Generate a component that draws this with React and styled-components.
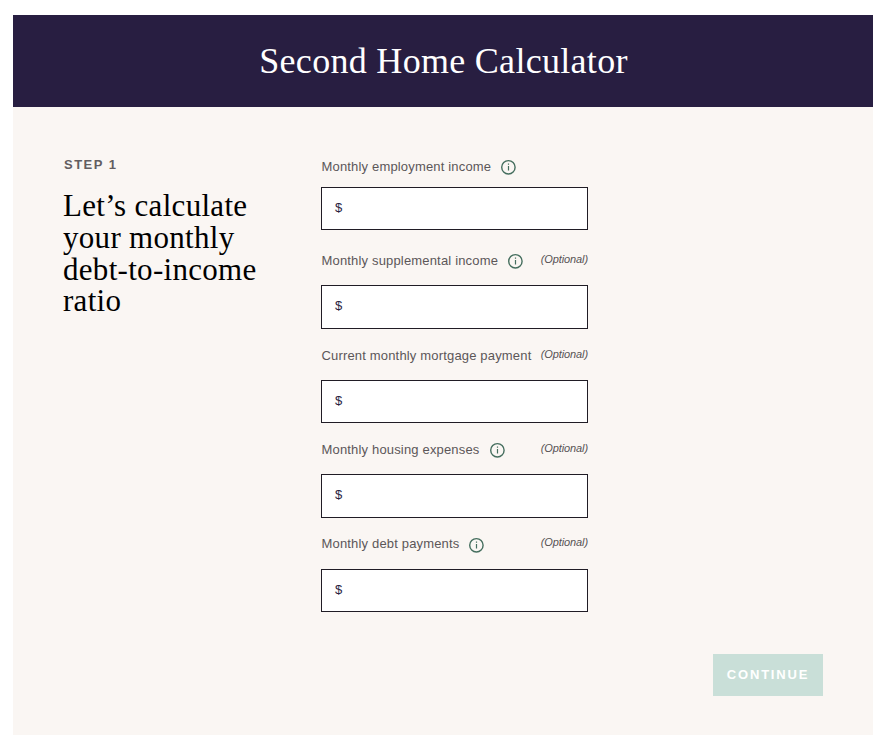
import React from "react";
import styled, { createGlobalStyle } from "styled-components";

const GlobalStyle = createGlobalStyle`
  * { box-sizing: border-box; }
  body { margin: 0; background: #fff; font-family: "Liberation Sans", Arial, sans-serif; }
`;

const Page = styled.div`
  height: 745px;
  padding: 15px 8px 10px 13px;
`;

const Card = styled.main`
  height: 720px;
  background: #faf6f3;
`;

const Banner = styled.header`
  height: 92px;
  background: #281e41;
  display: flex;
  justify-content: center;
`;

const Title = styled.h1`
  margin: 0;
  color: #fff;
  font: 400 36px/92px "Liberation Serif", "Times New Roman", serif;
  white-space: nowrap;
  letter-spacing: 0.3px;
  padding-left: 1px;
`;

const Content = styled.form`
  display: grid;
  grid-template-columns: 258px 267px;
  height: 547px;
  padding: 47px 0 0 50px;
`;

const Step = styled.p`
  margin: 3px 0 0 1px;
  color: #625d60;
  font-size: 13px;
  line-height: 16px;
  font-weight: 700;
  letter-spacing: 1.5px;
`;

const Heading = styled.h2`
  margin: 17px 0 0;
  color: #000;
  font: 400 31px/31.8px "Liberation Serif", "Times New Roman", serif;
  letter-spacing: 0.3px;
  white-space: nowrap;
`;

const Fields = styled.div`
  display: flex;
  flex-direction: column;
`;

const Field = styled.div`
  height: ${(p) => p.$height}px;
`;

const LabelRow = styled.div`
  display: flex;
  height: ${(p) => p.$height}px;
  align-items: flex-start;
`;

const Label = styled.label`
  padding-left: 0.5px;
  color: #5c5759;
  font-size: 13px;
  line-height: 26px;
  letter-spacing: 0.17px;
  white-space: nowrap;
`;

const InfoIcon = styled.svg`
  width: 16px;
  height: 16px;
  margin: ${(p) => p.$top}px 0 0 9px;
  flex: none;
`;

const Optional = styled.span`
  margin-left: auto;
  color: #575254;
  font-size: 11px;
  font-style: italic;
  line-height: 23px;
  letter-spacing: -0.1px;
`;

const InputBox = styled.div`
  display: flex;
  height: ${(p) => p.$height}px;
  border: 1px solid #201c25;
  background: #fff;
  padding-left: 13px;
  color: #281e41;
  font-size: 13px;
  line-height: 40px;
`;

const Input = styled.input`
  flex: 1;
  min-width: 0;
  border: 0;
  outline: 0;
  background: transparent;
`;

const Actions = styled.div`
  display: flex;
  justify-content: flex-end;
  padding-right: 50px;
`;

const Continue = styled.button`
  width: 110px;
  height: 42px;
  padding: 0;
  border: 0;
  background: #c9dfd8;
  color: #fff;
  font: 700 13px/40px "Liberation Sans", Arial, sans-serif;
  letter-spacing: 1.8px;
`;

const fields = [
  { label: "Monthly employment income", info: true, height: 94, row: 33, box: 43, iconTop: 5 },
  { label: "Monthly supplemental income", info: true, optional: true, height: 95, row: 37, box: 44, iconTop: 5 },
  { label: "Current monthly mortgage payment", optional: true, height: 94, row: 37, box: 43 },
  { label: "Monthly housing expenses", info: true, optional: true, height: 94, row: 37, box: 44, iconTop: 5 },
  { label: "Monthly debt payments", info: true, optional: true, height: 94, row: 38, box: 43, iconTop: 6 },
];

export default function App() {
  return (
    <Page>
      <GlobalStyle />
      <Card>
        <Banner><Title>Second Home Calculator</Title></Banner>
        <Content>
          <section>
            <Step>STEP 1</Step>
            <Heading>Let’s calculate<br />your monthly<br />debt-to-income<br />ratio</Heading>
          </section>
          <Fields>
            {fields.map((f, i) => (
              <Field key={f.label} $height={f.height}>
                <LabelRow $height={f.row}>
                  <Label htmlFor={`amount-${i}`}>{f.label}</Label>
                  {f.info && (
                    <InfoIcon $top={f.iconTop} viewBox="0 0 16 16" fill="none" stroke="#456e5e">
                      <circle cx="8.4" cy="8.3" r="6.7" strokeWidth="1.4" />
                      <path d="M8.5 7v4.5M8.5 4.6v1.2" strokeWidth="1.2" />
                    </InfoIcon>
                  )}
                  {f.optional && <Optional>(Optional)</Optional>}
                </LabelRow>
                <InputBox $height={f.box}>$<Input id={`amount-${i}`} /></InputBox>
              </Field>
            ))}
          </Fields>
        </Content>
        <Actions><Continue type="button">CONTINUE</Continue></Actions>
      </Card>
    </Page>
  );
}
